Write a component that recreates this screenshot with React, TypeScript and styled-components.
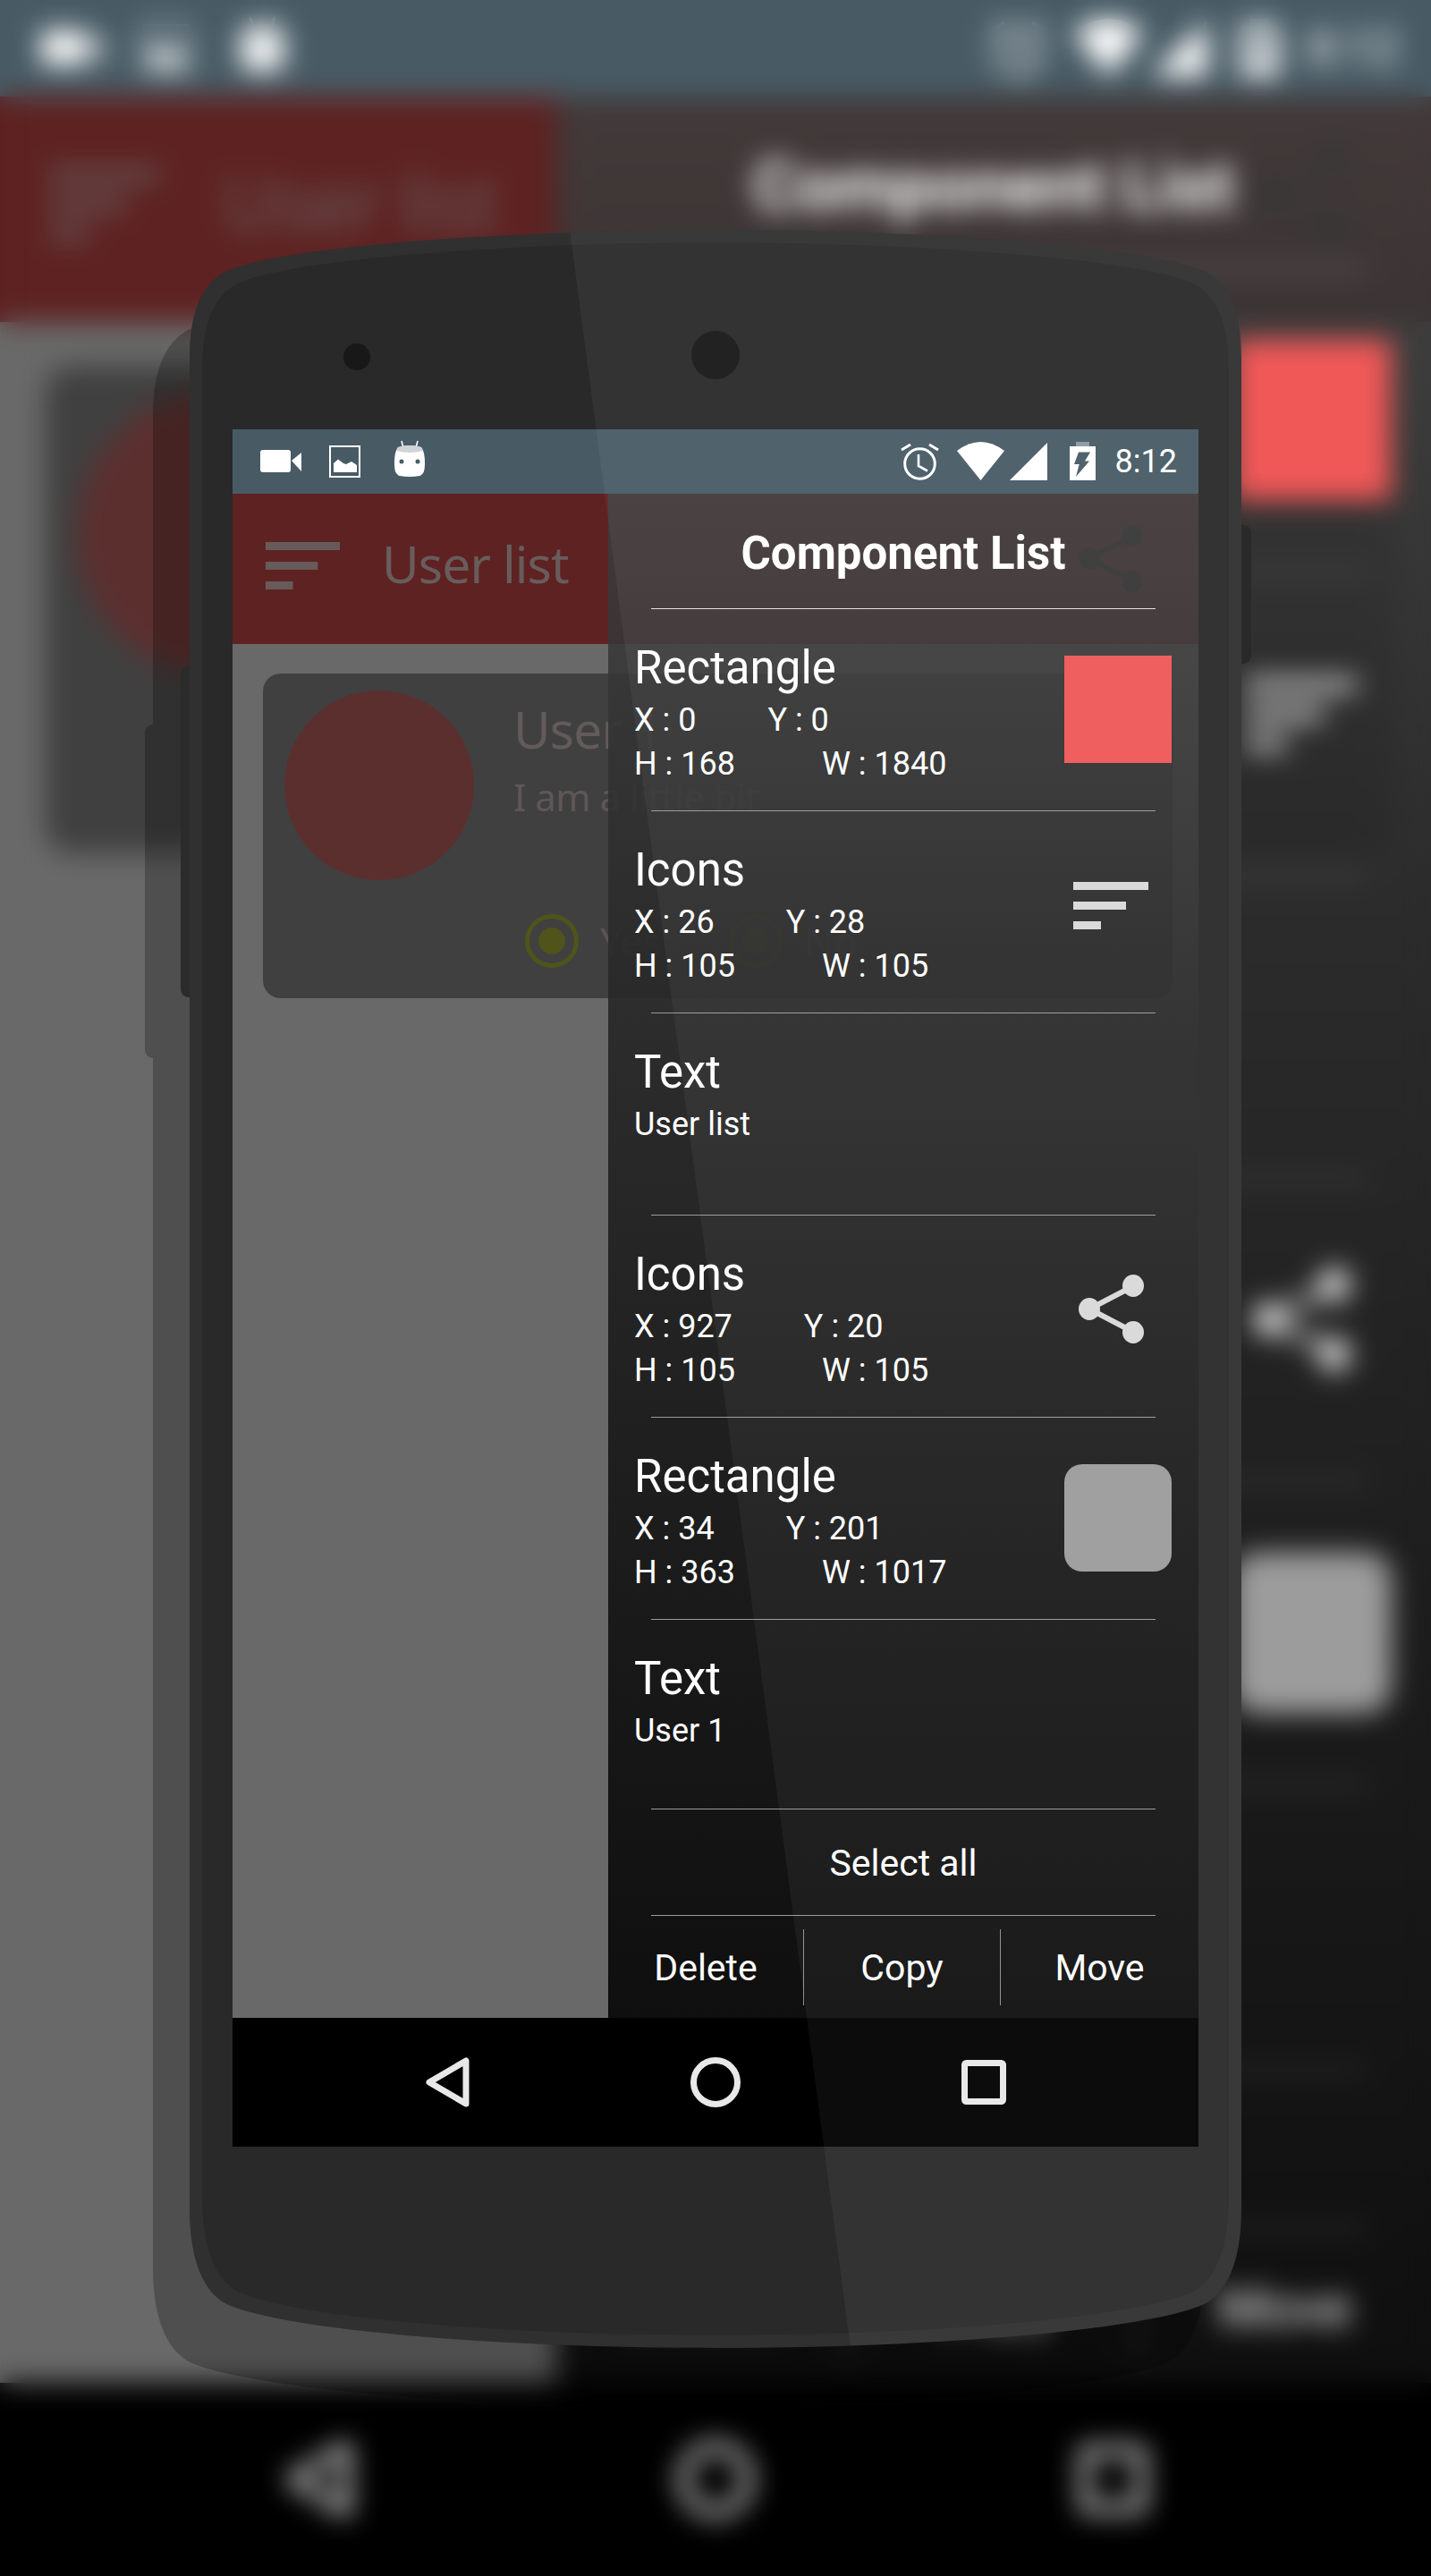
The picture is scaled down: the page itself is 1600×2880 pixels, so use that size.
import React from "react";
import styled, { createGlobalStyle } from "styled-components";

const Global = createGlobalStyle`
  html, body { margin: 0; padding: 0; background: #000; }
  #root { width: 1600px; height: 2880px; }
`;

const Stage = styled.div`
  position: relative;
  box-sizing: border-box;
  width: 1600px;
  height: 2880px;
  padding: 480px 0 0 260px;
  overflow: hidden;
  font-family: Roboto, "Liberation Sans", sans-serif;
  background: #000;
`;

const BackdropCopy = styled.div`
  position: absolute;
  left: 0;
  top: 0;
  transform-origin: 0 0;
  transform: scale(1.48148, 1.5);
`;

const BlurVeil = styled.div`
  position: absolute;
  inset: 0;
  backdrop-filter: blur(15px);
`;

const DeviceArt = styled.svg`
  position: absolute;
  left: 0;
  top: 0;
  width: 1600px;
  height: 2880px;
  pointer-events: none;
`;

const ScreenFrame = styled.div`
  position: relative;
  display: flex;
  flex-direction: column;
  width: 1080px;
  height: 1920px;
  overflow: hidden;
  background: #696969;
`;

const StatusBar = styled.div`
  display: flex;
  flex: 0 0 72px;
  background: #485b65;
  padding: 0 24px 0 0;
  box-sizing: border-box;
`;

const Glyph = styled.svg<{ $ml: number }>`
  display: block;
  flex: none;
  height: 72px;
  margin-left: ${(p) => p.$ml}px;
`;

const Clock = styled.span`
  margin-left: 22px;
  font-size: 36px;
  line-height: 72px;
  color: #fff;
`;

const Push = styled.div`
  flex: 1;
`;

const AppBar = styled.div`
  display: flex;
  flex: 0 0 168px;
  align-items: flex-start;
  background: #5e2222;
  font-family: "Noto Sans", sans-serif;
`;

const BarsSvg = styled.svg<{ $ml: number; $mt: number; $w: number; $h: number }>`
  display: block;
  flex: none;
  width: ${(p) => p.$w}px;
  height: ${(p) => p.$h}px;
  margin: ${(p) => p.$mt}px 0 0 ${(p) => p.$ml}px;
`;

const AppTitle = styled.div`
  flex: 0 0 206px;
  margin: 38px 3px 0 47px;
  font-size: 57px;
  letter-spacing: -0.9px;
  line-height: 80px;
  white-space: nowrap;
  color: #695c5c;
`;

const ShareSvg = styled.svg<{ $ml: number; $mt: number; $w: number; $h: number }>`
  display: block;
  flex: none;
  width: ${(p) => p.$w}px;
  height: ${(p) => p.$h}px;
  margin: ${(p) => p.$mt}px 0 0 ${(p) => p.$ml}px;
`;

const Content = styled.div`
  flex: 1;
  padding: 33px 0 0 34px;
  font-family: "Noto Sans", sans-serif;
`;

const Card = styled.div`
  display: flex;
  width: 1017px;
  height: 363px;
  border-radius: 20px;
  background: #404040;
`;

const Avatar = styled.div`
  flex: none;
  width: 212px;
  height: 212px;
  margin: 19px 0 0 24px;
  border-radius: 50%;
  background: #5c2f2f;
`;

const CardBody = styled.div`
  margin: 22px 0 0 44px;
`;

const CardName = styled.div`
  font-size: 57px;
  letter-spacing: -0.9px;
  line-height: 80px;
  color: #635a5a;
`;

const CardBlurb = styled.div`
  margin-top: 6px;
  font-size: 42px;
  letter-spacing: -0.5px;
  line-height: 60px;
  color: #5f5757;
`;

const Choices = styled.div`
  display: flex;
  margin: 101px 0 0 13px;
`;

const Choice = styled.div`
  display: flex;
  align-items: center;
  width: 228px;
  height: 60px;
  gap: 24px;
  font-size: 44px;
  color: #5c5353;
`;

const Radio = styled.div`
  display: flex;
  align-items: center;
  justify-content: center;
  box-sizing: border-box;
  width: 60px;
  height: 60px;
  border: 5px solid #50541a;
  border-radius: 50%;

  &::after {
    content: "";
    width: 30px;
    height: 30px;
    border-radius: 50%;
    background: #50541a;
  }
`;

const NavBar = styled.div`
  display: flex;
  flex: 0 0 144px;
  align-items: center;
  justify-content: center;
  gap: 240px;
  background: #000;
`;

const NavGlyph = styled.svg`
  display: block;
  width: 60px;
  height: 60px;
  fill: none;
  stroke: #e8e8e8;
  stroke-width: 7;
  stroke-linejoin: round;
`;

const Panel = styled.div`
  position: absolute;
  left: 420px;
  top: 72px;
  width: 660px;
  height: 1704px;
  display: flex;
  flex-direction: column;
  color: #fff;
  background: linear-gradient(
    to bottom,
    rgba(62, 62, 62, 0.85) 0%,
    rgba(38, 38, 38, 0.91) 35%,
    rgba(23, 23, 23, 0.98) 76%,
    rgba(15, 15, 15, 1) 100%
  );
`;

const PanelHead = styled.div`
  flex: 0 0 128px;
  box-sizing: border-box;
  padding-top: 39px;
  font-size: 51px;
  line-height: 56px;
  font-weight: 700;
  text-align: center;
`;

const Rule = styled.div<{ $strong?: boolean }>`
  flex: 0 0 1px;
  margin: 0 48px;
  background: ${(p) => (p.$strong ? "#e0e0e0" : "#9a9a9a")};
`;

const Row = styled.div<{ $h: number }>`
  display: flex;
  justify-content: space-between;
  flex: 0 0 ${(p) => p.$h}px;
  box-sizing: border-box;
  padding: 38px 30px 0 29px;
`;

const RowTitle = styled.div`
  font-size: 51px;
  line-height: 56px;
  margin-bottom: 6px;
`;

const RowLine = styled.div<{ $gap: number }>`
  display: flex;
  gap: ${(p) => p.$gap}px;
  font-size: 36px;
  line-height: 49px;
`;

const Thumb = styled.div<{ $fill?: string; $round?: boolean }>`
  flex: none;
  width: 120px;
  height: 120px;
  margin-top: 14px;
  background: ${(p) => p.$fill ?? "transparent"};
  border-radius: ${(p) => (p.$round ? "20px" : "0")};
`;

const SelectAll = styled.div`
  flex: 0 0 116px;
  padding-top: 2px;
  box-sizing: border-box;
  font-size: 41px;
  line-height: 116px;
  text-align: center;
`;

const Actions = styled.div`
  display: grid;
  grid-template-columns: 218px 220px 222px;
  padding-top: 15px;
`;

const Action = styled.div<{ $divided?: boolean }>`
  height: 85px;
  box-sizing: border-box;
  padding-top: 1px;
  font-size: 41px;
  line-height: 85px;
  text-align: center;
  border-left: ${(p) => (p.$divided ? "1px solid #8f8f8f" : "0")};
`;

const STATUS = "#485b65";

const Bars = ({ color, ml, mt, w, h }: { color: string; ml: number; mt: number; w: number; h: number }) => (
  <BarsSvg viewBox="0 0 84 53" preserveAspectRatio="none" $ml={ml} $mt={mt} $w={w} $h={h}>
    <rect x="0" y="0" width="84" height="9" fill={color} />
    <rect x="0" y="22" width="59" height="9" fill={color} />
    <rect x="0" y="44" width="31" height="9" fill={color} />
  </BarsSvg>
);

const ShareIcon = ({ color, ml, mt, w, h }: { color: string; ml: number; mt: number; w: number; h: number }) => (
  <ShareSvg viewBox="0 0 73 77" $ml={ml} $mt={mt} $w={w} $h={h}>
    <path d="M61 13 L12 38.5 L61 64" fill="none" stroke={color} strokeWidth="6" />
    <ellipse cx="12" cy="38.5" rx="12" ry="12.5" fill={color} />
    <ellipse cx="61" cy="12.5" rx="12" ry="12.5" fill={color} />
    <ellipse cx="61" cy="64.5" rx="12" ry="12.5" fill={color} />
  </ShareSvg>
);

type RowData = {
  title: string;
  lines: { gap: number; items: string[] }[];
  kind?: "red" | "gray" | "bars" | "share";
  h: number;
};

const ROWS: RowData[] = [
  { title: "Rectangle", kind: "red", h: 225, lines: [{ gap: 80, items: ["X : 0", "Y : 0"] }, { gap: 97, items: ["H : 168", "W : 1840"] }] },
  { title: "Icons", kind: "bars", h: 225, lines: [{ gap: 80, items: ["X : 26", "Y : 28"] }, { gap: 97, items: ["H : 105", "W : 105"] }] },
  { title: "Text", h: 225, lines: [{ gap: 0, items: ["User list"] }] },
  { title: "Icons", kind: "share", h: 225, lines: [{ gap: 80, items: ["X : 927", "Y : 20"] }, { gap: 97, items: ["H : 105", "W : 105"] }] },
  { title: "Rectangle", kind: "gray", h: 225, lines: [{ gap: 80, items: ["X : 34", "Y : 201"] }, { gap: 97, items: ["H : 363", "W : 1017"] }] },
  { title: "Text", h: 211, lines: [{ gap: 0, items: ["User 1"] }] },
];

const RowVisual = ({ kind }: { kind?: RowData["kind"] }) => {
  if (kind === "red") return <Thumb $fill="#f05858" />;
  if (kind === "gray") return <Thumb $fill="#9c9c9c" $round />;
  if (kind === "bars")
    return (
      <Thumb>
        <Bars color="#d9d9d9" ml={10} mt={27} w={84} h={53} />
      </Thumb>
    );
  if (kind === "share")
    return (
      <Thumb>
        <ShareIcon color="#d9d9d9" ml={16} mt={14} w={73} h={77} />
      </Thumb>
    );
  return null;
};

const Screen = () => (
  <ScreenFrame>
    <StatusBar>
      <Glyph $ml={31} width="46" viewBox="0 0 46 72">
        <rect x="0" y="23" width="34" height="25" rx="3" fill="#fff" />
        <path d="M35 35 L46 26 V47 Z" fill="#fff" />
      </Glyph>
      <Glyph $ml={31} width="35" viewBox="0 0 35 72">
        <rect x="1" y="19" width="33" height="34" fill="none" stroke="#fff" strokeWidth="2" />
        <path d="M5 48 V38 L10 33.5 L16 38 L19 39 L25 36 L31 40 V48 Z" fill="#fff" />
      </Glyph>
      <Glyph $ml={38} width="34" viewBox="0 0 34 72">
        <path d="M8 13 L10 21 M26 13 L24 21" stroke="#fff" strokeWidth="1.6" />
        <path d="M4 20 Q17 16 30 20 C33 24 34 30 34 37 C34 46 33 50 28 52 Q17 54 6 52 C1 50 0 46 0 37 C0 30 1 24 4 20 Z" fill="#fff" />
        <path d="M4 20 Q17 16 30 20 L31.5 24 Q17 28 2.5 24 Z" fill="#cfd4d6" />
        <circle cx="8" cy="36" r="2.5" fill={STATUS} />
        <circle cx="26" cy="36" r="2.5" fill={STATUS} />
      </Glyph>
      <Push />
      <Glyph $ml={0} width="43" viewBox="0 0 43 72">
        <circle cx="21.5" cy="38.5" r="16.8" fill="none" stroke="#fff" strokeWidth="3" />
        <path d="M20 28 V41 L30 46.5" fill="none" stroke="#fff" strokeWidth="2.6" />
        <path d="M1 23 L11 17 M42 23 L32 17" stroke="#fff" strokeWidth="3" />
      </Glyph>
      <Glyph $ml={20} width="53" viewBox="0 0 53 72">
        <path d="M0 24 Q26.5 4 53 24 L26.5 57 Z" fill="#fff" />
      </Glyph>
      <Glyph $ml={6} width="42" viewBox="0 0 42 72">
        <path d="M0 57 L42 15 V57 Z" fill="#fff" />
      </Glyph>
      <Glyph $ml={25} width="29" viewBox="0 0 29 72">
        <rect x="7" y="14" width="15" height="5" fill="#8a9aa1" />
        <rect x="0" y="19" width="29" height="38" fill="#fff" />
        <path d="M10 25.5 H23 L17 35.5 H22 L7 53 L10.7 39 H5 Z" fill={STATUS} />
      </Glyph>
      <Clock>8:12</Clock>
    </StatusBar>
    <AppBar>
      <Bars color="#675a5a" ml={37} mt={54} w={83} h={53} />
      <AppTitle>User list</AppTitle>
      <ShareIcon color="#1c1c1c" ml={567} mt={35} w={72} h={75} />
    </AppBar>
    <Content>
      <Card>
        <Avatar />
        <CardBody>
          <CardName>User 1</CardName>
          <CardBlurb>I am a little bit</CardBlurb>
          <Choices>
            <Choice>
              <Radio />
              Yes
            </Choice>
            <Choice>
              <Radio />
              No
            </Choice>
          </Choices>
        </CardBody>
      </Card>
    </Content>
    <NavBar>
      <NavGlyph viewBox="0 0 60 60">
        <path d="M10 30 L51 6 V54 Z" />
      </NavGlyph>
      <NavGlyph viewBox="0 0 60 60">
        <circle cx="30" cy="30" r="24.5" />
      </NavGlyph>
      <NavGlyph viewBox="0 0 60 60">
        <rect x="8.5" y="8.5" width="43" height="43" rx="2" />
      </NavGlyph>
    </NavBar>
    <Panel>
      <PanelHead>Component List</PanelHead>
      <Rule $strong />
      {ROWS.map((row, i) => (
        <React.Fragment key={i}>
          <Row $h={row.h}>
            <div>
              <RowTitle>{row.title}</RowTitle>
              {row.lines.map((line, j) => (
                <RowLine key={j} $gap={line.gap}>
                  {line.items.map((item) => (
                    <span key={item}>{item}</span>
                  ))}
                </RowLine>
              ))}
            </div>
            <RowVisual kind={row.kind} />
          </Row>
          <Rule />
        </React.Fragment>
      ))}
      <SelectAll>Select all</SelectAll>
      <Rule />
      <Actions>
        <Action>Delete</Action>
        <Action $divided>Copy</Action>
        <Action $divided>Move</Action>
      </Actions>
    </Panel>
  </ScreenFrame>
);

const OUTER =
  "M212 400 C212 350 225 320 248 306 C296 277 560 257 800 257 C1040 257 1304 277 1352 306 C1375 320 1388 350 1388 400 L1388 2470 C1388 2535 1368 2568 1342 2578 C1270 2606 1040 2625 800 2625 C560 2625 330 2606 258 2578 C232 2568 212 2535 212 2470 Z";

export default function App() {
  return (
    <>
      <Global />
      <Stage>
        <BackdropCopy aria-hidden="true">
          <Screen />
        </BackdropCopy>
        <BlurVeil />
        <DeviceArt viewBox="0 0 1600 2880">
          <g opacity="0.24" fill="#000">
            <rect x="162" y="810" width="20" height="373" rx="9" />
            <path d={OUTER} transform="translate(-41 65)" />
          </g>
          <rect x="202" y="745" width="20" height="370" rx="9" fill="#2b2b2b" />
          <rect x="1378" y="587" width="21" height="155" rx="9" fill="#292929" />
          <path d={OUTER} fill="#303030" />
          <path d={OUTER} fill="#292929" transform="translate(800 1441) scale(0.976 0.988) translate(-800 -1441)" />
          <circle cx="399" cy="399" r="15" fill="#181818" />
          <circle cx="800" cy="397" r="27" fill="#181818" />
        </DeviceArt>
        <Screen />
        <DeviceArt viewBox="0 0 1600 2880">
          <defs>
            <clipPath id="phone-clip">
              <path d={OUTER} />
            </clipPath>
          </defs>
          <path d="M636 250 H1400 V2640 H953 Z" fill="rgba(255,255,255,0.047)" clipPath="url(#phone-clip)" />
        </DeviceArt>
      </Stage>
    </>
  );
}
